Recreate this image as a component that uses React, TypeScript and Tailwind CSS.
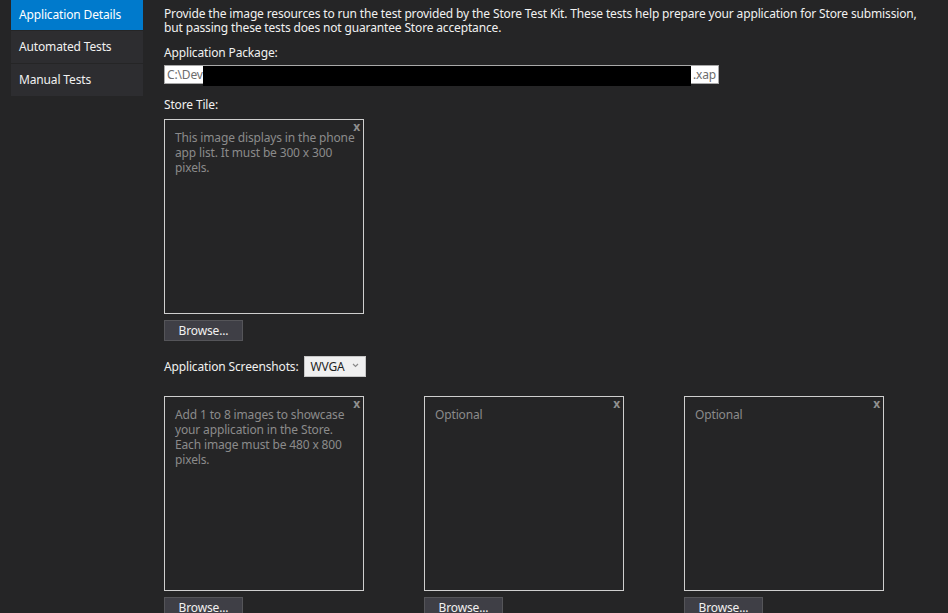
import React from 'react'

const FONT = "font-['Segoe_UI','Noto_Sans','Open_Sans',sans-serif] tracking-[-0.15px]"

const NAV = ['Application Details', 'Automated Tests', 'Manual Tests']

function ImageSlot({ hint }: { hint: string }) {
  return (
    <div className="flex flex-col gap-[6px]">
      <div className="relative w-[200px] h-[195px] border border-[#cfcfcf] pl-[10px] pr-[6px] pt-[10px]">
        <span className="absolute right-[3px] top-0 text-[12px] font-bold leading-[13px] text-[#8f8f8f]">x</span>
        <p className="text-[12px] leading-[15px] text-[#8b8b8b]">{hint}</p>
      </div>
      <button className="w-[79px] h-[21px] bg-[#3f3f46] border border-[#555559] text-[12px] leading-[16px] text-[#f1f1f1]">
        Browse...
      </button>
    </div>
  )
}

export default function App() {
  return (
    <div className={`flex w-full h-[613px] overflow-hidden bg-[#252526] ${FONT}`}>
      {/* Sidebar */}
      <nav className="ml-[11px] w-[132px] flex flex-col shrink-0">
        {NAV.map((label, i) => (
          <div
            key={label}
            className={
              i === 0
                ? 'h-[30px] bg-[#007acc] pl-[8px] text-[12px] leading-[30px] text-white'
                : 'h-[32px] mt-[1px] bg-[#2d2d30] pl-[8px] text-[12px] leading-[32px] text-[#f1f1f1]'
            }
          >
            {label}
          </div>
        ))}
      </nav>

      {/* Main */}
      <main className="ml-[21px] pt-[7px] flex flex-col text-[12px] text-[#f1f1f1]">
        <p className="leading-[14px] w-[770px]">
          Provide the image resources to run the test provided by the Store Test Kit. These tests help prepare your application for Store submission,
          but passing these tests does not guarantee Store acceptance.
        </p>

        <label className="mt-[11px] leading-[14px]">Application Package:</label>
        <div className="relative mt-[5px] w-[555px] h-[19px] bg-white border border-[#a9a9a9] flex items-center justify-between px-[2px] text-[12px] text-[#6d6d6d]">
          <span>C:\Dev</span>
          <span>.xap</span>
          <div className="absolute left-[38px] top-0 w-[488px] h-[20px] bg-black" />
        </div>

        <label className="mt-[14px] leading-[14px]">Store Tile:</label>
        <div className="mt-[7px]">
          <ImageSlot hint="This image displays in the phone app list. It must be 300 x 300 pixels." />
        </div>

        <div className="mt-[15px] flex items-center gap-[6px]">
          <span className="leading-[14px]">Application Screenshots:</span>
          <div className="w-[62px] h-[21px] bg-[#f0f0f0] border border-[#c6c6c6] flex items-center justify-between pl-[5px] pr-[6px] text-[#1e1e1e]">
            <span className="leading-[14px]">WVGA</span>
            <svg width="7" height="5" viewBox="0 0 7 5" className="mb-[2px]">
              <path d="M1 1 L3.5 3.5 L6 1" fill="none" stroke="#8a8a8a" strokeWidth="1.2" />
            </svg>
          </div>
        </div>

        <div className="mt-[19px] flex gap-[60px]">
          <ImageSlot hint="Add 1 to 8 images to showcase your application in the Store. Each image must be 480 x 800 pixels." />
          <ImageSlot hint="Optional" />
          <ImageSlot hint="Optional" />
        </div>
      </main>
    </div>
  )
}
